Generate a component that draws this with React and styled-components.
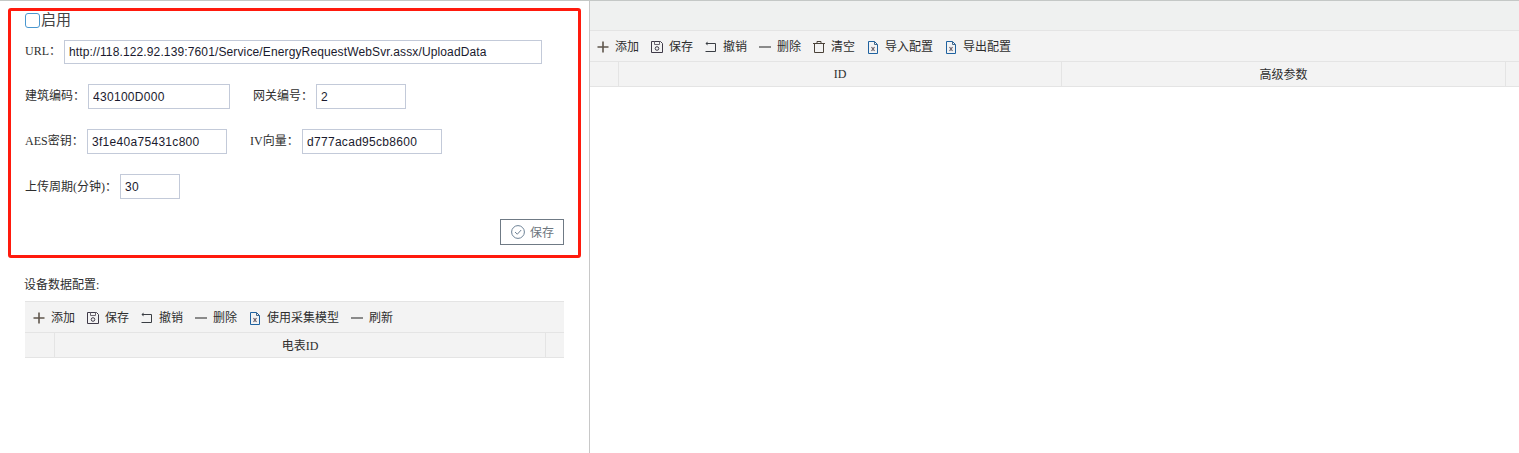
import React from 'react'
import styled, { createGlobalStyle } from 'styled-components'

const GlobalStyle = createGlobalStyle`
  * {
    box-sizing: border-box;
  }
  html,
  body {
    margin: 0;
    height: 453px;
    overflow: hidden;
    background: #fff;
  }
  body {
    font-family: 'Liberation Serif', 'Noto Sans CJK SC', serif;
    font-size: 12px;
    color: #2e2e2e;
  }
`

const Page = styled.div`
  display: grid;
  grid-template-columns: 590px 1fr;
  height: 453px;
  border-top: 1px solid #c4c8c6;
`

const LeftPanel = styled.div`
  border-right: 1px solid #c8c8c8;
  padding: 7px 8px 0;
`

const RightPanel = styled.div`
  display: flex;
  flex-direction: column;
`

const RightHeader = styled.div`
  height: 29px;
  flex: none;
  background: #eff1f0;
`

const ConfigBox = styled.section`
  display: flex;
  flex-direction: column;
  width: 573px;
  height: 250px;
  border: 3px solid #ff1a0d;
  border-radius: 3px;
  padding: 0 14px;
`

const EnableRow = styled.label`
  display: flex;
  align-items: center;
  height: 19px;
  margin-bottom: 10px;
  font-size: 15px;
  line-height: 19px;
  color: #444;
`

const Checkbox = styled.input`
  appearance: none;
  width: 15px;
  height: 15px;
  margin: 0 1px 0 0;
  border: 1px solid #4a97cf;
  border-radius: 3px;
  background: #fff;
`

const FormRow = styled.div`
  display: flex;
  align-items: center;
  margin-bottom: 20px;
`

const Field = styled.div`
  display: flex;
  align-items: center;
  margin-right: 23px;
`

const FieldLabel = styled.span`
  width: ${({ $width }) => $width}px;
  flex: none;
  white-space: nowrap;
  line-height: 16px;
  margin-bottom: ${({ $raised }) => ($raised ? '2px' : '0')};
`

const TextInput = styled.input`
  width: ${({ $width }) => $width}px;
  height: ${({ $height }) => $height || 25}px;
  border: 1px solid #c3cad9;
  border-radius: 0;
  padding: 0 4px;
  outline: none;
  font-family: 'Liberation Sans', Arial, sans-serif;
  font-size: 12px;
  letter-spacing: ${({ $spacing }) => $spacing || 0.3}px;
  color: #1a1a2e;
  background: #fff;
`

const ButtonRow = styled.div`
  display: flex;
  justify-content: flex-end;
`

const SaveButton = styled.button`
  display: flex;
  align-items: center;
  gap: 5px;
  width: 64px;
  height: 26px;
  padding: 0 0 0 10px;
  border: 1px solid #6f7a85;
  background: #fff;
  font-family: inherit;
  font-size: 12px;
  color: #6c757d;
`

const SectionTitle = styled.div`
  margin: 19px 0 7px 16px;
  height: 17px;
  line-height: 17px;
`

const GridWrap = styled.div`
  margin-left: ${({ $inset }) => ($inset ? '17px' : '0')};
  width: ${({ $inset }) => ($inset ? '539px' : 'auto')};
`

const Toolbar = styled.div`
  display: flex;
  align-items: center;
  gap: 12px;
  height: 32px;
  padding: 2px 0 0 ${({ $inset }) => ($inset ? 8 : 7)}px;
  background: #f3f3f3;
  border-top: 1px solid #e4e4e4;
  border-bottom: 1px solid #e4e4e4;
`

const ToolItem = styled.div`
  display: flex;
  align-items: center;
  gap: 6px;
  white-space: nowrap;
  line-height: 16px;
`

const GridHeader = styled.div`
  display: grid;
  grid-template-columns: ${({ $columns }) => $columns};
  height: 25px;
  background: #f3f3f3;
  border-bottom: 1px solid #e4e4e4;
`

const HeaderCell = styled.div`
  display: flex;
  align-items: center;
  justify-content: center;
  border-right: 1px solid #e4e4e4;
  &:last-child {
    border-right: none;
  }
`

const Svg = styled.svg`
  display: block;
  flex: none;
  width: ${({ $size }) => $size || 12}px;
  height: ${({ $height, $size }) => $height || $size || 12}px;
  fill: none;
`

const PlusIcon = () => (
  <Svg viewBox="0 0 12 12">
    <path d="M6 0.5V11.5M0.5 6H11.5" stroke="#5f564c" strokeWidth="1.6" />
  </Svg>
)

const SaveIcon = () => (
  <Svg viewBox="0 0 12 12">
    <path d="M0.5 0.5H9.5L11.5 2.5V11.5H0.5Z" stroke="#3f3a48" />
    <path d="M3.5 0.5V3.5H8.5V0.5" stroke="#6d6872" />
    <circle cx="6" cy="7.5" r="1.8" stroke="#3f3a48" />
  </Svg>
)

const UndoIcon = () => (
  <Svg viewBox="0 0 12 12">
    <path d="M1 2.5H10.5V10.5H0.5" stroke="#3a3e44" />
    <path d="M2.5 0.5V4.5L0.5 2.5Z" fill="#3a3e44" />
  </Svg>
)

const MinusIcon = () => (
  <Svg viewBox="0 0 12 12">
    <path d="M0 6H12" stroke="#8a8a8a" strokeWidth="2" />
  </Svg>
)

const TrashIcon = () => (
  <Svg viewBox="0 0 12 12">
    <path d="M0 2.5H12M4 2.5V0.5H8V2.5" stroke="#4a4238" />
    <path d="M1.5 2.5V11.5H10.5V2.5" stroke="#4a4238" />
  </Svg>
)

const FileIcon = () => (
  <Svg viewBox="0 0 12 13" $height={13}>
    <path d="M1.5 0.5H7.5L10.5 3.5V12.5H1.5Z" stroke="#1f62a0" />
    <path d="M7.5 0.5V3.5H10.5" stroke="#45688a" />
    <path d="M4.5 6L7.5 10M7.5 6L4.5 10" stroke="#6a5f68" strokeWidth="1.2" />
  </Svg>
)

const CheckCircleIcon = () => (
  <Svg viewBox="0 0 14 14" $size={14}>
    <circle cx="7" cy="7" r="6.4" stroke="#6d8296" />
    <path d="M4 7L6.3 9.2L10.2 5" stroke="#6d7f92" />
  </Svg>
)

const icons = {
  add: PlusIcon,
  save: SaveIcon,
  undo: UndoIcon,
  minus: MinusIcon,
  trash: TrashIcon,
  file: FileIcon,
}

const leftTools = [
  ['add', '添加'],
  ['save', '保存'],
  ['undo', '撤销'],
  ['minus', '删除'],
  ['file', '使用采集模型'],
  ['minus', '刷新'],
]

const rightTools = [
  ['add', '添加'],
  ['save', '保存'],
  ['undo', '撤销'],
  ['minus', '删除'],
  ['trash', '清空'],
  ['file', '导入配置'],
  ['file', '导出配置'],
]

const DataGrid = ({ tools, columns, titles, inset }) => (
  <GridWrap $inset={inset}>
    <Toolbar $inset={inset}>
      {tools.map(([icon, label]) => {
        const Icon = icons[icon]
        return (
          <ToolItem key={label}>
            <Icon />
            {label}
          </ToolItem>
        )
      })}
    </Toolbar>
    <GridHeader $columns={columns}>
      {titles.map((title, i) => (
        <HeaderCell key={i}>{title}</HeaderCell>
      ))}
    </GridHeader>
  </GridWrap>
)

const LabeledInput = ({
  label,
  labelWidth,
  raised = true,
  inputWidth,
  inputHeight,
  spacing,
  value,
}) => (
  <Field>
    <FieldLabel $width={labelWidth} $raised={raised}>
      {label}
    </FieldLabel>
    <TextInput
      $width={inputWidth}
      $height={inputHeight}
      $spacing={spacing}
      defaultValue={value}
      readOnly
    />
  </Field>
)

const App = () => (
  <>
    <GlobalStyle />
    <Page>
      <LeftPanel>
        <ConfigBox>
          <EnableRow>
            <Checkbox type="checkbox" />
            启用
          </EnableRow>
          <FormRow>
            <LabeledInput
              label="URL："
              labelWidth={39}
              inputWidth={478}
              inputHeight={24}
              spacing={0.13}
              value="http://118.122.92.139:7601/Service/EnergyRequestWebSvr.assx/UploadData"
            />
          </FormRow>
          <FormRow>
            <LabeledInput
              label="建筑编码："
              labelWidth={63}
              inputWidth={142}
              value="430100D000"
            />
            <LabeledInput
              label="网关编号："
              labelWidth={63}
              inputWidth={90}
              value="2"
            />
          </FormRow>
          <FormRow>
            <LabeledInput
              label="AES密钥："
              labelWidth={62}
              inputWidth={140}
              value="3f1e40a75431c800"
            />
            <LabeledInput
              label="IV向量："
              labelWidth={52}
              inputWidth={140}
              value="d777acad95cb8600"
            />
          </FormRow>
          <FormRow>
            <LabeledInput
              label="上传周期(分钟)："
              labelWidth={95}
              raised={false}
              inputWidth={60}
              value="30"
            />
          </FormRow>
          <ButtonRow>
            <SaveButton type="button">
              <CheckCircleIcon />
              保存
            </SaveButton>
          </ButtonRow>
        </ConfigBox>
        <SectionTitle>设备数据配置:</SectionTitle>
        <DataGrid
          inset
          tools={leftTools}
          columns="30px 491px 18px"
          titles={['', '电表ID', '']}
        />
      </LeftPanel>
      <RightPanel>
        <RightHeader />
        <DataGrid
          tools={rightTools}
          columns="29px 443px 444px 1fr"
          titles={['', 'ID', '高级参数', '']}
        />
      </RightPanel>
    </Page>
  </>
)

export default App
